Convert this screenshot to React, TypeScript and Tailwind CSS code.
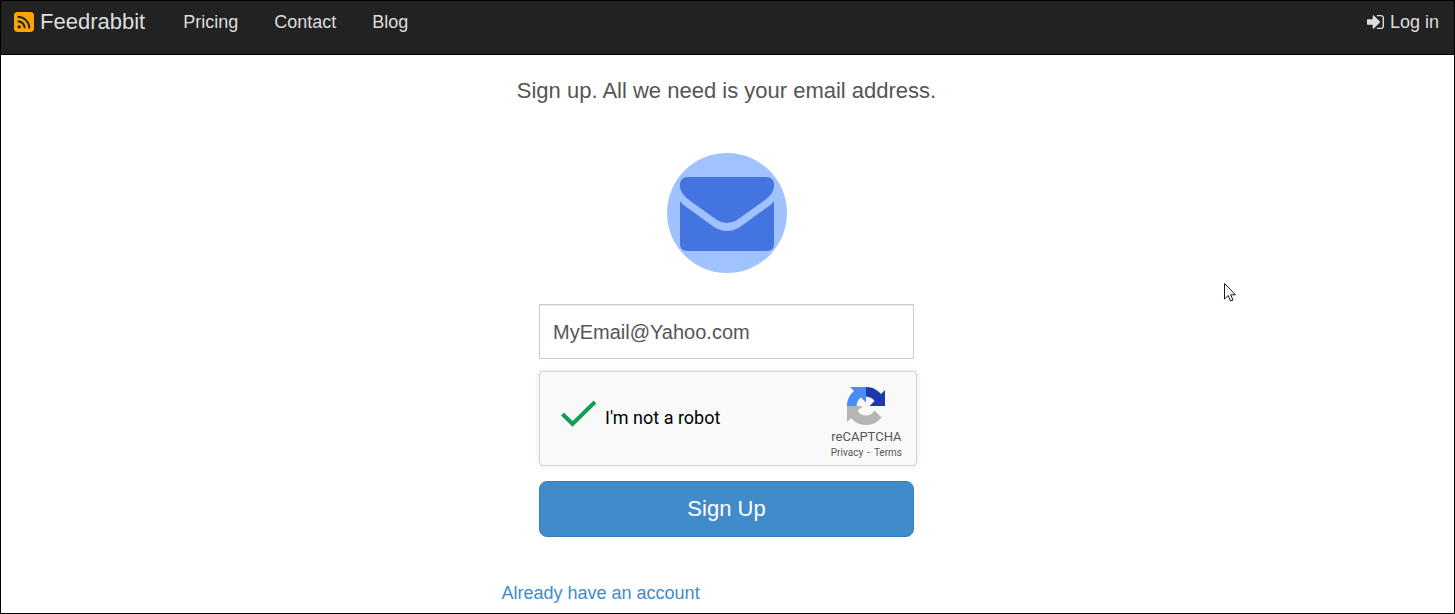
import { useState } from 'react';

const navLinks = [
  { label: 'Pricing', href: '#pricing' },
  { label: 'Contact', href: '#contact' },
  { label: 'Blog', href: '#blog' },
];

const RssIcon = () => (
  <svg className="size-5" viewBox="0 0 20 20" fill="none" aria-hidden="true">
    <rect width="20" height="20" rx="3.7" fill="#ffa500" />
    <circle cx="5.2" cy="14.9" r="1.7" fill="#222" />
    <path d="M3.6 9.2A7 7 0 0 1 10.7 16.4M3.6 4.7A11.6 11.6 0 0 1 15.3 16.4" stroke="#222" strokeWidth="2" />
  </svg>
);

const SignInIcon = () => (
  <svg className="h-4 w-[17px]" viewBox="0 200 1536 1392" fill="currentColor" aria-hidden="true">
    <path d="M1184 896q0 26-19 45l-544 544q-19 19-45 19t-45-19-19-45v-288h-448q-26 0-45-19t-19-45v-384q0-26 19-45t45-19h448v-288q0-26 19-45t45-19 45 19l544 544q19 19 19 45zm352-352v704q0 119-84.5 203.5t-203.5 84.5h-320q-13 0-22.5-9.5t-9.5-22.5q0-4-1-20t-.5-26.5 3-23.5 10-19.5 20.5-6.5h320q66 0 113-47t47-113v-704q0-66-47-113t-113-47h-312l-11.5-1-11.5-3-8-5.5-7-9-2-13.5q0-4-1-20t-.5-26.5 3-23.5 10-19.5 20.5-6.5h320q119 0 203.5 84.5t84.5 203.5z" />
  </svg>
);

const EnvelopeIcon = () => (
  <svg className="size-[120px]" viewBox="0 0 120 120" aria-hidden="true">
    <circle cx="60" cy="60" r="60" fill="#a0c3ff" />
    <path
      fill="#4374e0"
      d="M21 24H99Q107 24 107 32C107 38 104 42 98 47L70 67Q60 73 50 67L22 47C16 42 13 38 13 32Q13 24 21 24Z"
    />
    <path
      fill="#4374e0"
      d="M13 48Q15 51 18 53L47 74Q60 82 73 74L102 53Q105 51 107 48V91Q107 98 100 98H20Q13 98 13 91Z"
    />
  </svg>
);

const RecaptchaLogo = () => (
  <svg className="size-[38px]" viewBox="0 0 38 38" aria-hidden="true">
    <path
      fill="#1c3aa9"
      d="M19 0C25.500 0 30.500 2.800 34 7L38 3V19H22.500L27.500 14C25.500 11 22.500 9.800 19 9.500Z"
    />
    <path
      fill="#4a8cf5"
      d="M0 19C0 12.500 2.800 7.500 7 4L3 0H19V15.500L14 10.500C11 12.500 9.800 15.500 9.500 19Z"
    />
    <path
      fill="#b5b5b5"
      d="M19 38C12.500 38 7.500 35.200 4 31L0 35V19H15.500L10.500 24C12.500 27 15.500 28.500 19 28.500C22.500 28.500 25.500 27 27.500 23.500L34.500 30.500C31 35 26 38 19 38Z"
    />
  </svg>
);

const Pointer = () => (
  <svg className="pointer-events-none absolute top-[282px] left-[1223px] h-5 w-3" viewBox="0 0 12 20" aria-hidden="true">
    <path d="M.5 .5V16L4.200 12.500L6.500 18L9 17L6.700 11.800H11.500Z" fill="#fff" stroke="#111827" />
  </svg>
);

export default function SignupPage() {
  const [email, setEmail] = useState('MyEmail@Yahoo.com');
  const [notRobot, setNotRobot] = useState(true);

  const handleSubmit = (e: React.FormEvent) => {
    e.preventDefault();
  };

  return (
    <div className="relative min-h-screen border border-black bg-white font-['Liberation_Sans',Arial,sans-serif] text-lg text-[#555]">
      <nav className="flex h-[54px] items-start border-b border-black bg-[#222] pt-[5px] pr-[15px] pl-[13px] leading-8 text-[#ddd]">
        <a href="#home" className="mr-[38px] flex items-center gap-[6px] text-[22px] leading-8">
          <RssIcon />
          Feedrabbit
        </a>
        <div className="flex gap-9">
          {navLinks.map((link) => (
            <a key={link.label} href={link.href}>
              {link.label}
            </a>
          ))}
        </div>
        <a href="#login" className="ml-auto flex items-center gap-[6px]">
          <SignInIcon />
          Log in
        </a>
      </nav>

      <main className="mx-auto flex w-full max-w-[452px] flex-col items-center pt-5 pr-[2px]">
        <h1 className="text-center text-[22px] leading-8">Sign up. All we need is your email address.</h1>
        <div className="mt-[46px]">
          <EnvelopeIcon />
        </div>

        <form onSubmit={handleSubmit} className="mt-[31px] flex w-full max-w-[375px] flex-col">
          <input
            type="email"
            aria-label="Email address"
            value={email}
            onChange={(e) => setEmail(e.target.value)}
            className="h-[55px] border border-[#ccc] px-[13px] pt-px text-xl text-[#555] shadow-[inset_0_1px_1px_rgba(0,0,0,0.075)] focus:outline-none"
          />

          <div className="mt-3 -mr-[3px] flex h-[95px] items-center justify-between rounded-[4px] border border-[#d3d3d3] bg-[#f9f9f9] pr-[14px] pb-[2px] pl-5 font-[Roboto,sans-serif] shadow-[0_0_5px_1px_rgba(0,0,0,0.08)]">
            <label htmlFor="robot" className="flex items-center gap-2 text-lg text-black">
              <span className="grid h-9 w-[37px] place-items-center">
                <input
                  id="robot"
                  type="checkbox"
                  checked={notRobot}
                  onChange={(e) => setNotRobot(e.target.checked)}
                  className="peer col-start-1 row-start-1 size-full appearance-none"
                />
                <svg className="pointer-events-none invisible col-start-1 row-start-1 size-full pb-2 peer-checked:visible" viewBox="0 0 37 28" fill="none" aria-hidden="true">
                  <path d="M2.500 14L12.500 24L35 2" stroke="#0f9d58" strokeWidth="4" />
                </svg>
              </span>
              I'm not a robot
            </label>
            <div className="flex flex-col items-center pt-3 text-[#555]">
              <RecaptchaLogo />
              <span className="mt-1 text-[13px] leading-4">reCAPTCHA</span>
              <span className="flex gap-1 text-[10px] leading-4">
                <a href="#privacy">Privacy</a>
                <span>-</span>
                <a href="#terms">Terms</a>
              </span>
            </div>
          </div>

          <button
            type="submit"
            className="mt-[15px] h-14 rounded-lg border border-[#357ebd] bg-[#428bca] text-[22px] text-white"
          >
            Sign Up
          </button>
        </form>

        <a href="#login" className="mt-10 self-start leading-8 text-[#428bca]">
          Already have an account
        </a>
      </main>

      <Pointer />
    </div>
  );
}
